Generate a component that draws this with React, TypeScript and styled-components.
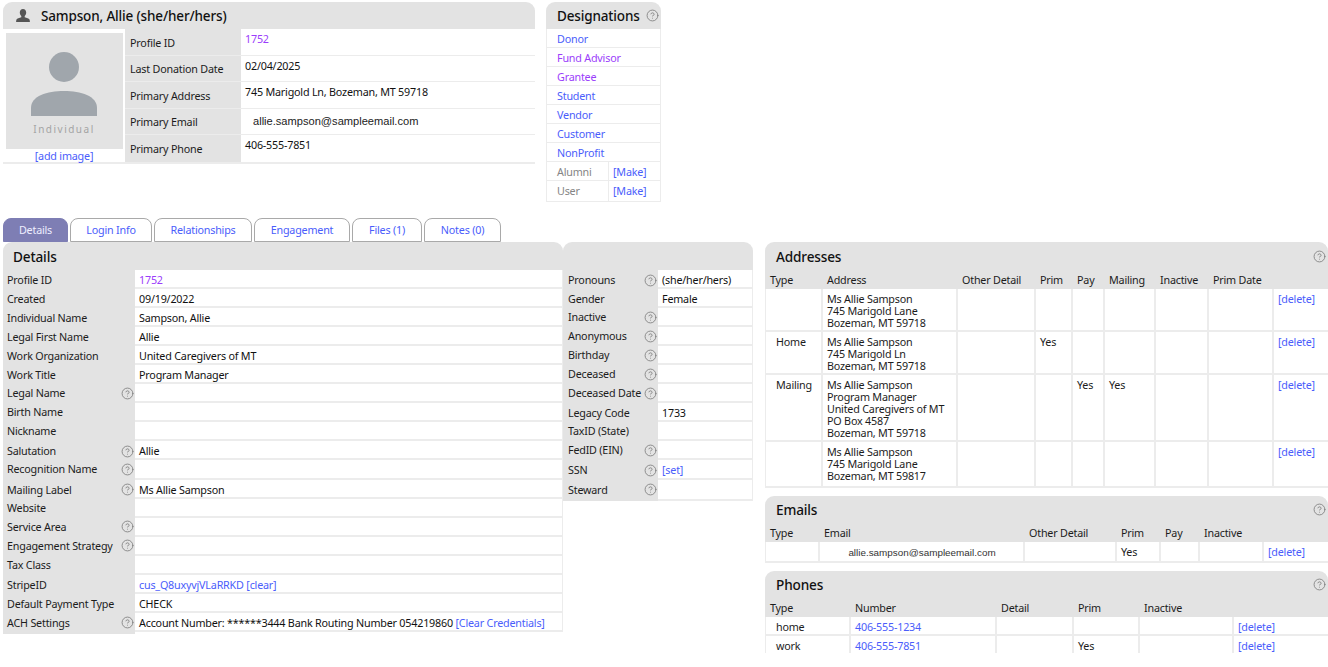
import React from "react";
import styled, { createGlobalStyle } from "styled-components";
import { CircleHelp } from "lucide-react";

const GREY = "#e3e3e3";
const LINE = "#ececec";
const LINK = "#4a5dfb";
const VISITED = "#9b3dfb";

const Global = createGlobalStyle`
  html, body { margin: 0; padding: 0; background: #fff; }
  body { font-family: "Noto Sans", "DejaVu Sans", sans-serif; font-size: 10.75px; letter-spacing: -0.2px; color: #1c1c1c; }
`;

const Page = styled.div`
  width: 1328px;
  height: 653px;
  overflow: hidden;
  padding: 2px 0 0 3px;
  box-sizing: border-box;
  background: #fff;
`;
const TopRow = styled.div`
  display: flex;
  align-items: flex-start;
  gap: 11px;
  height: 216px;
`;
const Profile = styled.section`
  width: 532px;
`;
const TitleBar = styled.div`
  height: 27px;
  background: ${GREY};
  border-radius: 9px 9px 0 0;
  display: flex;
  align-items: center;
  padding: 0 2px 0 10px;
  font-size: 13.5px;
  letter-spacing: -0.15px;
  font-weight: 500;
  color: #111;
`;
const TitleText = styled.span`
  flex: 1;
  margin-left: 1px;
`;
const PersonSvg = styled.svg`
  width: 16px;
  height: 16px;
  margin: 0 9px 0 2px;
  fill: #555;
`;
const ProfileBody = styled.div`
  display: flex;
  border-bottom: 2px solid ${LINE};
`;
const PhotoCol = styled.div`
  width: 122px;
  display: flex;
  flex-direction: column;
  align-items: center;
  padding-top: 4px;
  box-sizing: border-box;
`;
const Photo = styled.div`
  width: 117px;
  height: 116px;
  background: ${GREY};
  display: flex;
  flex-direction: column;
  align-items: center;
`;
const AvatarSvg = styled.svg`
  width: 66px;
  height: 67px;
  margin-top: 19px;
  fill: #a0a6ac;
`;
const PhotoLabel = styled.div`
  margin-top: 3px;
  font-size: 10px;
  font-weight: 400;
  letter-spacing: 1.5px;
  color: #a4a4a4;
`;
const AddImage = styled.a`
  color: ${LINK};
  height: 13px;
  line-height: 14px;
`;
const ProfileRows = styled.div`
  flex: 1;
`;
const ProfileRow = styled.div`
  display: grid;
  grid-template-columns: 116px 1fr;
  height: 26.6px;
  border-bottom: 1px solid ${LINE};
  box-sizing: border-box;
  &:last-child { border-bottom: 0; }
`;
const ProfileLabel = styled.div`
  background: ${GREY};
  padding: 6.5px 0 0 5px;
  line-height: 14px;
`;
const ProfileValue = styled.div<{ $tone?: string }>`
  padding: 3px 0 0 4px;
  line-height: 14px;
  color: ${(p) => p.$tone ?? "#111"};
`;
const EmailValue = styled.div`
  padding: 5px 0 0 12px;
  font-family: "Liberation Sans", Arial, sans-serif;
  font-size: 11.1px;
  letter-spacing: 0;
  line-height: 14px;
  color: #222;
`;

const Desig = styled.section`
  width: 115px;
`;
const DesigRow = styled.div<{ $split?: boolean }>`
  display: grid;
  grid-template-columns: ${(p) => (p.$split ? "61px 1fr" : "1fr")};
  height: 19px;
  line-height: 20px;
  box-sizing: border-box;
  border: 1px solid ${LINE};
  border-top: 0;
  &:last-child { height: 21px; }
`;
const DesigCell = styled.div<{ $tone?: string; $line?: boolean }>`
  padding-left: ${(p) => (p.$line ? "4px" : "10px")};
  color: ${(p) => p.$tone ?? "#111"};
  border-left: ${(p) => (p.$line ? `1px solid ${LINE}` : "0")};
`;

const Tabs = styled.nav`
  display: flex;
  gap: 2px;
  height: 24px;
`;
const Tab = styled.a<{ $w: number; $active?: boolean }>`
  width: ${(p) => p.$w}px;
  box-sizing: border-box;
  border: 1px solid ${(p) => (p.$active ? "#7e7eb4" : "#a9a9a9")};
  border-radius: 8px 8px 0 0;
  background: ${(p) => (p.$active ? "#7e7eb4" : "#fff")};
  color: ${(p) => (p.$active ? "#eef" : LINK)};
  text-align: center;
  line-height: 22px;
`;

const Main = styled.div`
  display: flex;
  gap: 12px;
  align-items: flex-start;
`;
const DetailsArea = styled.div`
  display: flex;
  width: 750px;
  flex: none;
  align-items: flex-start;
`;
const DetailCol = styled.section<{ $w: number }>`
  width: ${(p) => p.$w}px;
  flex: none;
`;
const SectionBar = styled.div<{ $h?: number }>`
  height: ${(p) => p.$h ?? 27}px;
  box-sizing: border-box;
  padding: ${(p) => (p.$h ? 1 : 0)}px 2px 0 10px;
  background: ${GREY};
  border-radius: 9px 9px 0 0;
  display: flex;
  align-items: center;
  font-size: 13.6px;
  letter-spacing: -0.15px;
  font-weight: 500;
  color: #111;
`;
const DetailRow = styled.div<{ $label: number; $tall?: boolean }>`
  display: grid;
  grid-template-columns: ${(p) => p.$label}px 1fr;
  height: ${(p) => (p.$tall ? 21 : 19.05)}px;
  box-sizing: border-box;
  border-right: 1px solid ${LINE};
  border-bottom: 2px solid ${LINE};
`;
const DetailLabel = styled.div<{ $pad?: number }>`
  background: ${GREY};
  display: flex;
  align-items: center;
  justify-content: space-between;
  padding: 0 1px 1px ${(p) => p.$pad ?? 4}px;
  margin-bottom: -2px;
  white-space: nowrap;
`;
const DetailValue = styled.div<{ $tone?: string }>`
  padding: 1px 0 0 4px;
  line-height: 18px;
  white-space: nowrap;
  color: ${(p) => p.$tone ?? "#111"};
`;
const Link = styled.a`
  color: ${LINK};
`;
const Help = styled(CircleHelp)`
  width: 13px;
  height: 13px;
  color: #808080;
  stroke-width: 1.6;
  flex: none;
`;

const RightCol = styled.div`
  width: 563px;
  flex: none;
  display: flex;
  flex-direction: column;
  gap: 8px;
`;
const TableRow = styled.div<{ $cols: string; $h?: number; $head?: boolean }>`
  display: grid;
  grid-template-columns: ${(p) => p.$cols};
  height: ${(p) => p.$h ?? 19}px;
  box-sizing: border-box;
  background: ${(p) => (p.$head ? GREY : "#fff")};
  box-shadow: ${(p) => (p.$head ? "none" : `inset 1px 0 0 ${LINE}`)};
  border-bottom: ${(p) => (p.$head ? "0" : `2px solid ${LINE}`)};
`;
const Cell = styled.div<{ $first?: boolean; $head?: boolean; $tone?: string }>`
  padding: ${(p) => (p.$head ? "1px" : "4px")} 0 0 ${(p) => (p.$first && !p.$head ? "11px" : "5px")};
  line-height: 12px;
  white-space: pre-line;
  color: ${(p) => p.$tone ?? "#1c1c1c"};
  border-right: ${(p) => (p.$head ? "0" : `1px solid ${LINE}`)};
  box-shadow: ${(p) => (p.$head ? "none" : `1px 0 0 ${LINE}`)};
  display: ${(p) => (p.$head ? "flex" : "block")};
  align-items: center;
  &:last-child { border-right: 0; box-shadow: none; }
`;
const MailCell = styled.div`
  font-family: "Liberation Sans", Arial, sans-serif;
  font-size: 9.9px;
  letter-spacing: 0;
  line-height: 12px;
  padding: 5px 0 0 2px;
  text-align: center;
  color: #333;
  border-right: 1px solid ${LINE};
  box-shadow: 1px 0 0 ${LINE};
`;

const leftRows: [string, boolean, React.ReactNode?, string?][] = [
  ["Profile ID", false, "1752", VISITED],
  ["Created", false, "09/19/2022"],
  ["Individual Name", false, "Sampson, Allie"],
  ["Legal First Name", false, "Allie"],
  ["Work Organization", false, "United Caregivers of MT"],
  ["Work Title", false, "Program Manager"],
  ["Legal Name", true],
  ["Birth Name", false],
  ["Nickname", false],
  ["Salutation", true, "Allie"],
  ["Recognition Name", true],
  ["Mailing Label", true, "Ms Allie Sampson"],
  ["Website", false],
  ["Service Area", true],
  ["Engagement Strategy", true],
  ["Tax Class", false],
  ["StripeID", false, <Link>cus_Q8uxyvjVLaRRKD [clear]</Link>],
  ["Default Payment Type", false, "CHECK"],
  ["ACH Settings", true, <>Account Number: ******3444 Bank Routing Number 054219860 <Link>[Clear Credentials]</Link></>],
];
const rightRows: [string, boolean, React.ReactNode?][] = [
  ["Pronouns", true, "(she/her/hers)"],
  ["Gender", false, "Female"],
  ["Inactive", true],
  ["Anonymous", true],
  ["Birthday", true],
  ["Deceased", true],
  ["Deceased Date", true],
  ["Legacy Code", false, "1733"],
  ["TaxID (State)", false],
  ["FedID (EIN)", true],
  ["SSN", true, <Link>[set]</Link>],
  ["Steward", true],
];

const addrCols = "57px 135px 78px 37px 32px 51px 53px 65px 55px";
const mailCols = "54px 205px 92px 44px 39px 64px 65px";
const phoneCols = "85px 146px 77px 66px 94px 95px";
const DEL = "[delete]";

const addrRows: { h: number; c: string[] }[] = [
  { h: 43, c: ["", "Ms Allie Sampson\n745 Marigold Lane\nBozeman, MT 59718", "", "", "", "", "", ""] },
  { h: 43, c: ["Home", "Ms Allie Sampson\n745 Marigold Ln\nBozeman, MT 59718", "", "Yes", "", "", "", ""] },
  { h: 67, c: ["Mailing", "Ms Allie Sampson\nProgram Manager\nUnited Caregivers of MT\nPO Box 4587\nBozeman, MT 59718", "", "", "Yes", "Yes", "", ""] },
  { h: 46, c: ["", "Ms Allie Sampson\n745 Marigold Lane\nBozeman, MT 59817", "", "", "", "", "", ""] },
];

function HeadRow({ cols, labels }: { cols: string; labels: string[] }) {
  return (
    <TableRow $cols={cols} $head>
      {labels.map((l, i) => (
        <Cell $head key={i}>{l}</Cell>
      ))}
    </TableRow>
  );
}

export default function App() {
  return (
    <Page>
      <Global />
      <TopRow>
        <Profile>
          <TitleBar>
            <PersonSvg viewBox="0 0 16 16">
              <path d="M8 1c-2 0-3.2 1.500-3.2 3.600 0 1.500.6 2.800 1.500 3.500v1.100c-1.900.6-4.300 1.300-4.800 2.300-.3.6-.4 1.600-.4 2.500h13.800c0-.9-.1-1.900-.4-2.500-.5-1-2.900-1.700-4.800-2.300V8.100c.9-.7 1.500-2 1.500-3.500C11.200 2.500 10 1 8 1z" />
            </PersonSvg>
            <TitleText>Sampson, Allie (she/her/hers)</TitleText>
          </TitleBar>
          <ProfileBody>
            <PhotoCol>
              <Photo>
                <AvatarSvg viewBox="0 0 66 67">
                  <circle cx="33" cy="15" r="15" />
                  <path d="M0 64V56C0 44 16 39 33 39s33 5 33 17v8z" />
                </AvatarSvg>
                <PhotoLabel>Individual</PhotoLabel>
              </Photo>
              <AddImage>[add image]</AddImage>
            </PhotoCol>
            <ProfileRows>
              <ProfileRow>
                <ProfileLabel>Profile ID</ProfileLabel>
                <ProfileValue $tone={VISITED}>1752</ProfileValue>
              </ProfileRow>
              <ProfileRow>
                <ProfileLabel>Last Donation Date</ProfileLabel>
                <ProfileValue>02/04/2025</ProfileValue>
              </ProfileRow>
              <ProfileRow>
                <ProfileLabel>Primary Address</ProfileLabel>
                <ProfileValue>745 Marigold Ln, Bozeman, MT 59718</ProfileValue>
              </ProfileRow>
              <ProfileRow>
                <ProfileLabel>Primary Email</ProfileLabel>
                <EmailValue>allie.sampson@sampleemail.com</EmailValue>
              </ProfileRow>
              <ProfileRow>
                <ProfileLabel>Primary Phone</ProfileLabel>
                <ProfileValue>406-555-7851</ProfileValue>
              </ProfileRow>
            </ProfileRows>
          </ProfileBody>
        </Profile>
        <Desig>
          <TitleBar>
            <TitleText>Designations</TitleText>
            <Help />
          </TitleBar>
          {[
            ["Donor", LINK],
            ["Fund Advisor", VISITED],
            ["Grantee", VISITED],
            ["Student", LINK],
            ["Vendor", LINK],
            ["Customer", LINK],
            ["NonProfit", LINK],
          ].map(([t, c]) => (
            <DesigRow key={t}>
              <DesigCell $tone={c}>{t}</DesigCell>
            </DesigRow>
          ))}
          {["Alumni", "User"].map((t) => (
            <DesigRow $split key={t}>
              <DesigCell $tone="#858585">{t}</DesigCell>
              <DesigCell $line $tone={LINK}>[Make]</DesigCell>
            </DesigRow>
          ))}
        </Desig>
      </TopRow>

      <Tabs>
        <Tab $w={65} $active>Details</Tab>
        <Tab $w={82}>Login Info</Tab>
        <Tab $w={98}>Relationships</Tab>
        <Tab $w={96}>Engagement</Tab>
        <Tab $w={70}>Files (1)</Tab>
        <Tab $w={77}>Notes (0)</Tab>
      </Tabs>

      <Main>
        <DetailsArea>
          <DetailCol $w={560}>
            <SectionBar $h={28}>Details</SectionBar>
            {leftRows.map(([l, h, v, tone]) => (
              <DetailRow $label={132} key={l}>
                <DetailLabel>
                  {l}
                  {h && <Help />}
                </DetailLabel>
                <DetailValue $tone={tone}>{v}</DetailValue>
              </DetailRow>
            ))}
          </DetailCol>
          <DetailCol $w={190}>
            <SectionBar $h={28} />
            {rightRows.map(([l, h, v], i) => (
              <DetailRow $label={95} $tall={i === rightRows.length - 1} key={l}>
                <DetailLabel $pad={5}>
                  {l}
                  {h && <Help />}
                </DetailLabel>
                <DetailValue>{v}</DetailValue>
              </DetailRow>
            ))}
          </DetailCol>
        </DetailsArea>

        <RightCol>
          <section>
            <SectionBar $h={28}>
              <TitleText>Addresses</TitleText>
              <Help />
            </SectionBar>
            <HeadRow cols={addrCols} labels={["Type", "Address", "Other Detail", "Prim", "Pay", "Mailing", "Inactive", "Prim Date", ""]} />
            {addrRows.map((r, i) => (
              <TableRow $cols={addrCols} $h={r.h} key={i}>
                {r.c.map((t, j) => (
                  <Cell $first={j === 0} key={j}>{t}</Cell>
                ))}
                <Cell $tone={LINK}>{DEL}</Cell>
              </TableRow>
            ))}
          </section>
          <section>
            <SectionBar>
              <TitleText>Emails</TitleText>
              <Help />
            </SectionBar>
            <HeadRow cols={mailCols} labels={["Type", "Email", "Other Detail", "Prim", "Pay", "Inactive", ""]} />
            <TableRow $cols={mailCols} $h={21}>
              <Cell $first />
              <MailCell>allie.sampson@sampleemail.com</MailCell>
              <Cell />
              <Cell>Yes</Cell>
              <Cell />
              <Cell />
              <Cell $tone={LINK}>{DEL}</Cell>
            </TableRow>
          </section>
          <section>
            <SectionBar>
              <TitleText>Phones</TitleText>
              <Help />
            </SectionBar>
            <HeadRow cols={phoneCols} labels={["Type", "Number", "Detail", "Prim", "Inactive", ""]} />
            <TableRow $cols={phoneCols}>
              <Cell $first>home</Cell>
              <Cell $tone={LINK}>406-555-1234</Cell>
              <Cell />
              <Cell />
              <Cell />
              <Cell $tone={LINK}>{DEL}</Cell>
            </TableRow>
            <TableRow $cols={phoneCols}>
              <Cell $first>work</Cell>
              <Cell $tone={LINK}>406-555-7851</Cell>
              <Cell />
              <Cell>Yes</Cell>
              <Cell />
              <Cell $tone={LINK}>{DEL}</Cell>
            </TableRow>
          </section>
        </RightCol>
      </Main>
    </Page>
  );
}
